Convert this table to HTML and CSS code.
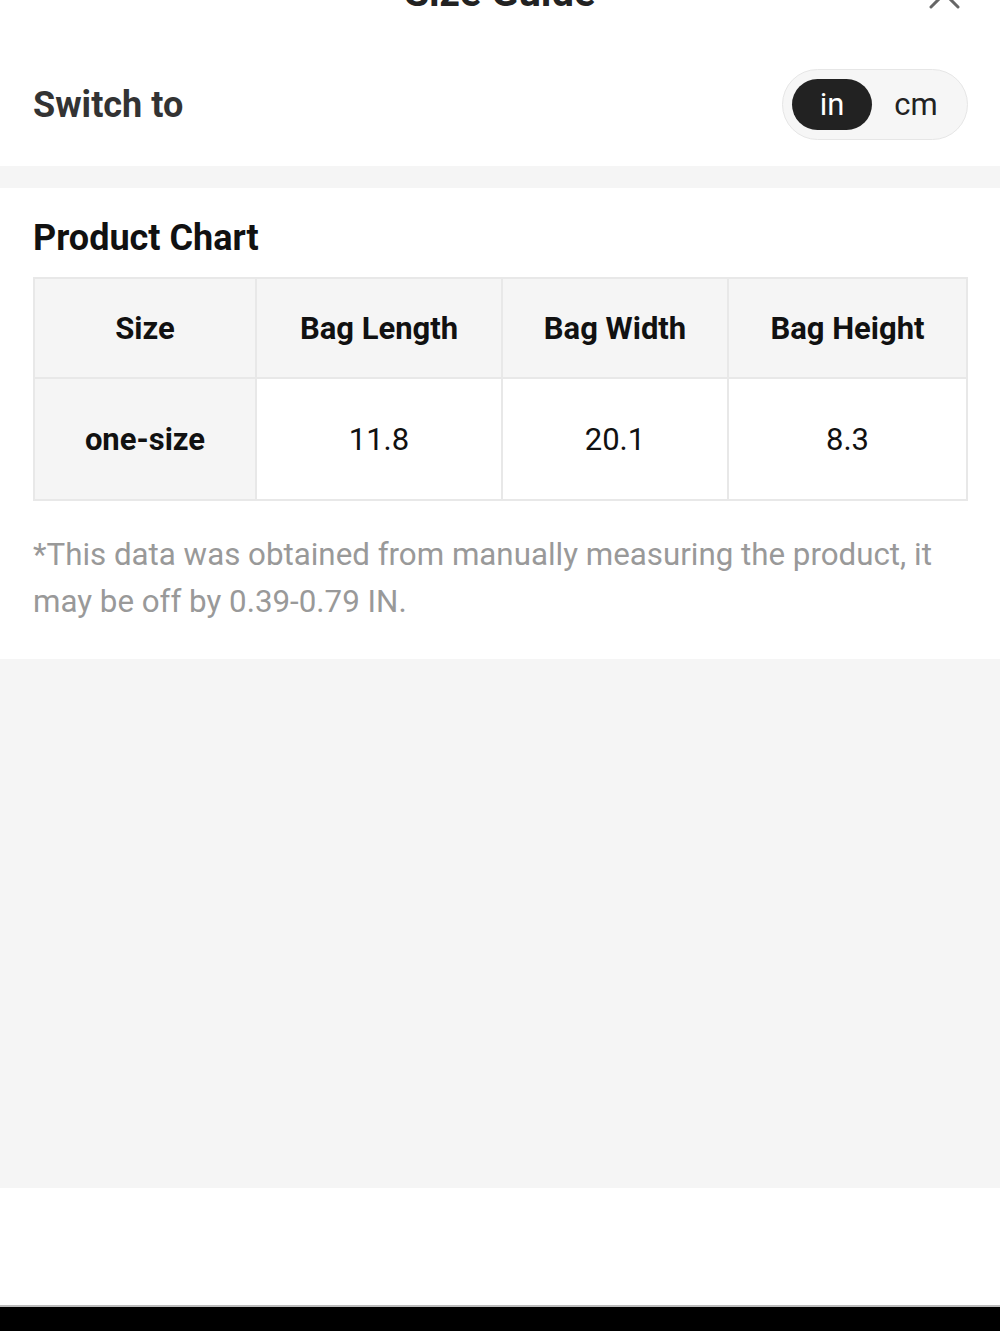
FILE: index.html
```html
<!DOCTYPE html>
<html lang="en">
<head>
    <meta charset="UTF-8">
    <meta name="viewport" content="width=device-width, initial-scale=1.0">
    <title>Size Guide</title>
    <link rel="stylesheet" href="styles.css">
</head>
<body>
    <div class="sheet">
        <div class="head">
            <span></span>
            <h1 class="head-title">Size Guide</h1>
            <button class="close-btn" aria-label="Close">
                <svg width="31" height="31" viewBox="0 0 31 31">
                    <path d="M2 2 L29 29 M29 2 L2 29" stroke="#666" stroke-width="3" fill="none" stroke-linecap="round"/>
                </svg>
            </button>
        </div>

        <div class="switch-row">
            <span class="switch-label">Switch to</span>
            <div class="unit-toggle">
                <span class="unit active">in</span>
                <span class="unit">cm</span>
            </div>
        </div>

        <div class="divider"></div>

        <div class="chart">
            <h2 class="chart-title">Product Chart</h2>
            <table class="size-table">
                <thead>
                    <tr>
                        <th class="c1">Size</th>
                        <th class="c2">Bag Length</th>
                        <th class="c3">Bag Width</th>
                        <th>Bag Height</th>
                    </tr>
                </thead>
                <tbody>
                    <tr>
                        <th>one-size</th>
                        <td>11.8</td>
                        <td>20.1</td>
                        <td>8.3</td>
                    </tr>
                </tbody>
            </table>
            <p class="note">*This data was obtained from manually measuring the product, it may be off by 0.39-0.79 IN.</p>
        </div>

        <div class="filler"></div>
        <div class="bottom-space"></div>
        <div class="nav-bar"></div>
    </div>
</body>
</html>
```

FILE: styles.css
```css
body {
    margin: 0;
    font-family: Roboto, "Liberation Sans", sans-serif;
    background-color: #fff;
}
.sheet {
    overflow: hidden;
}
.head {
    display: grid;
    grid-template-columns: 1fr auto 1fr;
    align-items: center;
    height: 48px;
    margin-top: -31px;
    padding: 0 40px;
}
.head-title {
    margin: 0;
    font-size: 40px;
    line-height: 48px;
    font-weight: 700;
    color: #222;
}
.close-btn {
    justify-self: end;
    display: flex;
    padding: 0;
    border: none;
    background: none;
}
.switch-row {
    display: flex;
    justify-content: space-between;
    align-items: center;
    padding: 52px 32px 26px 33px;
}
.switch-label {
    font-size: 36px;
    font-weight: 700;
    color: #333;
}
.unit-toggle {
    display: flex;
    align-items: center;
    gap: 4px;
    padding: 9px 11px 9px 9px;
    background-color: #f6f6f6;
    border: 1px solid #e6e6e6;
    border-radius: 36px;
}
.unit {
    width: 80px;
    height: 51px;
    line-height: 51px;
    text-align: center;
    font-size: 31px;
    color: #222;
    border-radius: 26px;
}
.unit.active {
    background-color: #222;
    color: #fff;
}
.divider {
    height: 22px;
    background-color: #f5f5f5;
}
.chart {
    padding: 30px 32px 34px 33px;
}
.chart-title {
    margin: 0 0 19px;
    font-size: 36px;
    line-height: 40px;
    font-weight: 700;
    color: #111;
}
.size-table {
    width: 100%;
    table-layout: fixed;
    border-collapse: collapse;
    font-size: 31px;
    color: #111;
}
.size-table th,
.size-table td {
    border: 2px solid #e8e8e8;
    text-align: center;
    font-weight: 400;
}
.size-table th {
    font-weight: 700;
    background-color: #f5f5f5;
}
.size-table thead th {
    height: 96px;
}
.size-table tbody th,
.size-table tbody td {
    height: 118px;
}
.c1 { width: 218px; }
.c2 { width: 242px; }
.c3 { width: 222px; }
.note {
    margin: 30px 0 0;
    font-size: 31.3px;
    line-height: 47px;
    color: #999;
}
.filler {
    height: 529px;
    background-color: #f5f5f5;
}
.bottom-space {
    height: 117px;
    background-color: #fff;
    border-bottom: 2px solid #bbb;
}
.nav-bar {
    height: 30px;
    background-color: #000;
}
```
